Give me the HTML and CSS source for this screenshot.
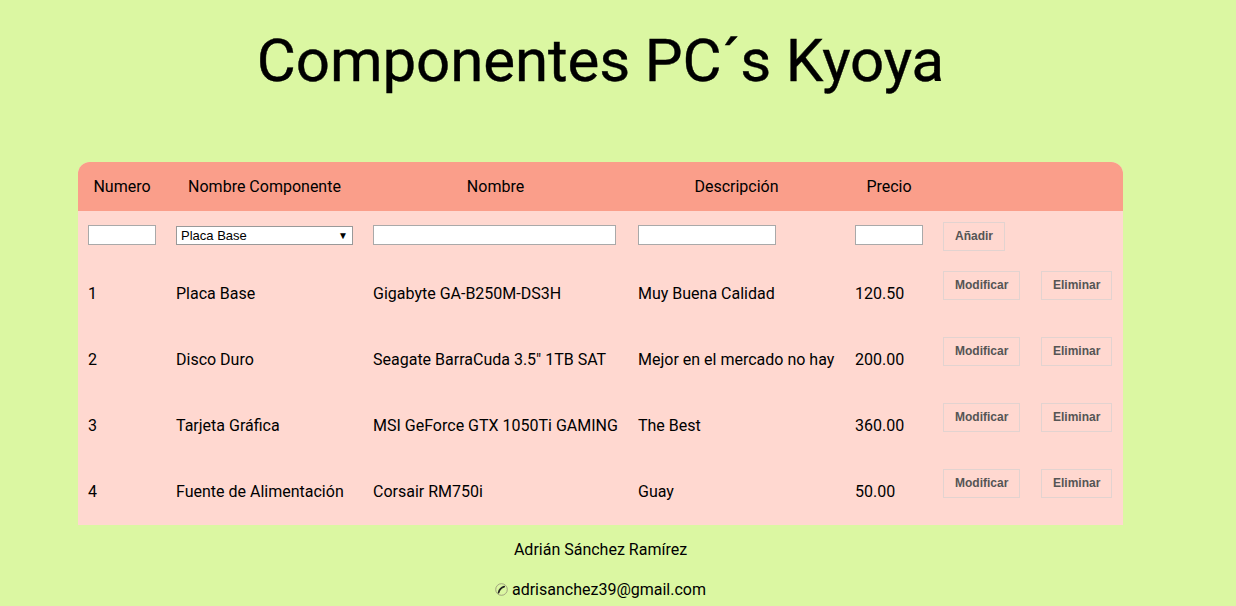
FILE: index.html
```html
<!DOCTYPE html>
<html lang="es">
<head>
<meta charset="utf-8">
<title>Componentes PC´s Kyoya</title>
<link rel="stylesheet" href="styles.css">
</head>
<body>
<div class="page">
  <h1 class="title">Componentes PC´s Kyoya</h1>
  <table class="grid">
    <thead>
      <tr class="head">
        <th class="c-num">Numero</th>
        <th class="c-comp">Nombre Componente</th>
        <th class="c-name">Nombre</th>
        <th class="c-desc">Descripción</th>
        <th class="c-price">Precio</th>
        <th class="c-btn1"></th>
        <th class="c-btn2"></th>
      </tr>
    </thead>
    <tbody>
      <tr class="form-row">
        <td><input class="field full" type="text"></td>
        <td><div class="select"><span>Placa Base</span><span class="arrow">▼</span></div></td>
        <td><input class="field name" type="text"></td>
        <td><input class="field desc" type="text"></td>
        <td><input class="field full" type="text"></td>
        <td class="btn-cell"><button class="btn">Añadir</button></td>
        <td></td>
      </tr>
      <tr class="data-row">
        <td>1</td><td>Placa Base</td><td>Gigabyte GA-B250M-DS3H</td><td>Muy Buena Calidad</td><td>120.50</td>
        <td class="btn-cell"><button class="btn">Modificar</button></td>
        <td class="btn-cell"><button class="btn">Eliminar</button></td>
      </tr>
      <tr class="data-row">
        <td>2</td><td>Disco Duro</td><td>Seagate BarraCuda 3.5" 1TB SAT</td><td>Mejor en el mercado no hay</td><td>200.00</td>
        <td class="btn-cell"><button class="btn">Modificar</button></td>
        <td class="btn-cell"><button class="btn">Eliminar</button></td>
      </tr>
      <tr class="data-row">
        <td>3</td><td>Tarjeta Gráfica</td><td>MSI GeForce GTX 1050Ti GAMING</td><td>The Best</td><td>360.00</td>
        <td class="btn-cell"><button class="btn">Modificar</button></td>
        <td class="btn-cell"><button class="btn">Eliminar</button></td>
      </tr>
      <tr class="data-row last">
        <td>4</td><td>Fuente de Alimentación</td><td>Corsair RM750i</td><td>Guay</td><td>50.00</td>
        <td class="btn-cell"><button class="btn">Modificar</button></td>
        <td class="btn-cell"><button class="btn">Eliminar</button></td>
      </tr>
    </tbody>
  </table>
  <footer class="footer">
    <p class="author">Adrián Sánchez Ramírez</p>
    <p class="mail"><svg class="icon" width="13" height="13" viewBox="0 0 13 13" aria-hidden="true"><circle cx="6.5" cy="6.5" r="5.8" fill="none" stroke="#9a9a7a" stroke-width="0.9"/><path d="M3.6 9.6 C4.2 7 6 4.6 9.2 3.6" fill="none" stroke="#222" stroke-width="1.7" stroke-linecap="round"/></svg> adrisanchez39@gmail.com</p>
  </footer>
</div>
</body>
</html>
```

FILE: styles.css
```css
html, body {
  margin: 0;
  padding: 0;
  background: #dbf7a2;
  font-family: Roboto, "Liberation Sans", sans-serif;
  color: #000;
}
.page {
  width: 1045px;
  margin-left: 78px;
}
.title {
  margin: 0;
  padding-top: 26px;
  height: 162px;
  box-sizing: border-box;
  text-align: center;
  font-size: 60px;
  font-weight: 400;
  line-height: 70px;
  letter-spacing: -0.1px;
  -webkit-text-stroke: 0.4px #000;
}
.grid {
  width: 1045px;
  border-collapse: separate;
  border-spacing: 0;
  background: #ffd8d0;
  border-radius: 12px 12px 0 0;
  font-size: 16px;
}
.grid th, .grid td {
  padding: 0 10px;
  text-align: left;
  white-space: nowrap;
}
.head { height: 49px; }
.head th {
  background: #fa9e8a;
  font-weight: 400;
  text-align: center;
  padding: 0;
}
.head th:first-child { border-top-left-radius: 12px; }
.head th:last-child { border-top-right-radius: 12px; }
.c-num { width: 88px; }
.c-comp { width: 197px; }
.c-name { width: 265px; }
.c-desc { width: 217px; }
.c-price { width: 88px; }
.c-btn1 { width: 98px; }
.c-btn2 { width: 92px; }
.form-row { height: 51px; }
.form-row td {
  vertical-align: middle;
  padding-bottom: 3px;
}
.data-row { height: 66px; }
.data-row.last { height: 65px; }
.data-row td {
  vertical-align: middle;
  padding-bottom: 3px;
}
.grid td.btn-cell {
  vertical-align: top;
  padding-top: 9px;
  padding-bottom: 0;
}
.grid .form-row td.btn-cell { padding-top: 11px; }
.field {
  display: block;
  box-sizing: border-box;
  height: 20px;
  border: 1px solid #a9a9a9;
  background: #fff;
  padding: 0 3px;
  margin: 0;
}
.field.full { width: 100%; }
.field.name { width: 243px; }
.field.desc { width: 138px; }
.select {
  box-sizing: border-box;
  width: 177px;
  height: 19px;
  border: 1px solid #999;
  background: #fff;
  display: flex;
  align-items: center;
  justify-content: space-between;
  padding: 0 4px;
  font-family: "Liberation Sans", Arial, sans-serif;
  font-size: 13px;
  color: #000;
}
.select .arrow { font-size: 10px; }
.btn {
  font-family: "Liberation Sans", Arial, sans-serif;
  font-weight: 700;
  font-size: 12px;
  line-height: 15px;
  color: #555;
  background: transparent;
  border: 1px solid #e2d3d0;
  padding: 6px 11px;
  margin: 0;
}
.footer {
  text-align: center;
  font-size: 16px;
}
.author {
  margin: 15px 0 0;
  line-height: 19px;
}
.mail {
  margin: 21px 0 0;
  line-height: 19px;
}
.icon {
  vertical-align: -1px;
}
```
